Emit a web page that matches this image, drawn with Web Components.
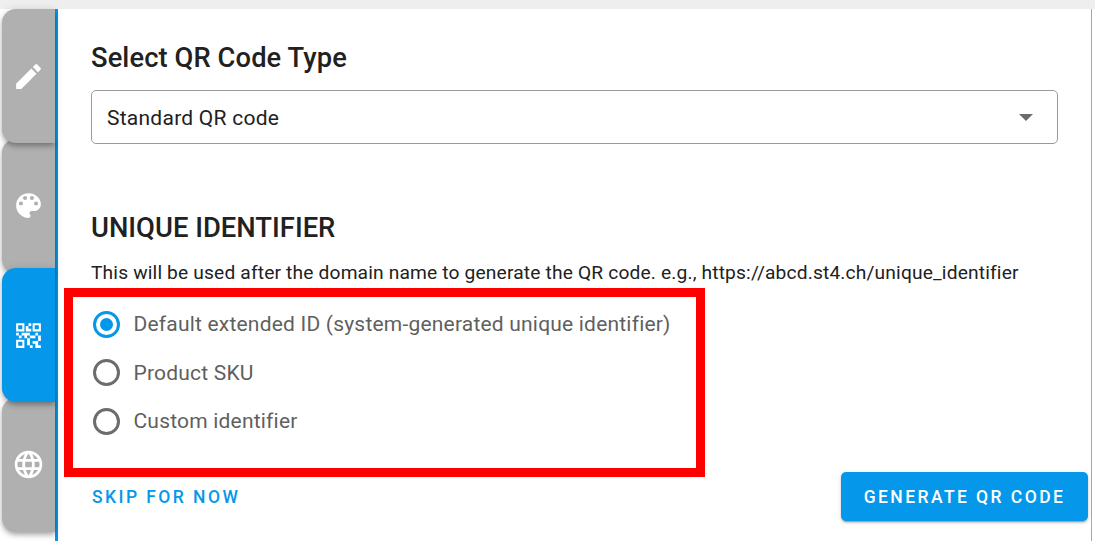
<!DOCTYPE html>
<html><head><meta charset="utf-8">
<style>
html,body{margin:0;padding:0;background:#fff;}
body{width:1100px;height:545px;overflow:hidden;font-family:Roboto,"Liberation Sans",sans-serif;}
</style></head>
<body>
<qr-shell>
  <side-tab slot="tabs" icon="edit"></side-tab>
  <side-tab slot="tabs" icon="palette"></side-tab>
  <side-tab slot="tabs" icon="qr" active></side-tab>
  <side-tab slot="tabs" icon="globe"></side-tab>
  <h-title>Select QR Code Type</h-title>
  <select-box>Standard QR code</select-box>
  <section-title>UNIQUE IDENTIFIER</section-title>
  <help-text>This will be used after the domain name to generate the QR code. e.g., https://abcd.st4.ch/unique_identifier</help-text>
  <radio-group>
    <radio-item checked>Default extended ID (system-generated unique identifier)</radio-item>
    <radio-item>Product SKU</radio-item>
    <radio-item>Custom identifier</radio-item>
  </radio-group>
  <action-row>
    <text-button>SKIP FOR NOW</text-button>
    <primary-button>GENERATE QR CODE</primary-button>
  </action-row>
</qr-shell>
<script>
const ICONS={
 edit:'<path d="M3 17.25V21h3.75L17.81 9.94l-3.75-3.75L3 17.25zM20.71 7.04a1 1 0 0 0 0-1.41l-2.34-2.34a1 1 0 0 0-1.41 0l-1.83 1.83 3.75 3.75 1.83-1.83z"/>',
 palette:'<path d="M12 3a9 9 0 0 0 0 18c.83 0 1.5-.67 1.5-1.5 0-.39-.15-.74-.39-1.01-.23-.26-.38-.61-.38-.99 0-.83.67-1.5 1.5-1.5H16c2.76 0 5-2.24 5-5 0-4.42-4.03-8-9-8zm-5.5 9a1.5 1.5 0 1 1 0-3 1.5 1.5 0 0 1 0 3zm3-4a1.5 1.5 0 1 1 0-3 1.5 1.5 0 0 1 0 3zm5 0a1.5 1.5 0 1 1 0-3 1.5 1.5 0 0 1 0 3zm3 4a1.5 1.5 0 1 1 0-3 1.5 1.5 0 0 1 0 3z"/>',
 qr:'<path d="M15 21h-2v-2h2v2zM13 14h-2v5h2v-5zM21 12h-2v4h2v-4zM19 10h-2v2h2v-2zM7 12H5v2h2v-2zM5 10H3v2h2v-2zM12 5h2V3h-2v2zM4.5 4.5v3h3v-3h-3zM9 9H3V3h6v6zM4.5 16.5v3h3v-3h-3zM9 21H3v-6h6v6zM16.5 4.5v3h3v-3h-3zM21 9h-6V3h6v6zM19 19v-3h-4v2h2v3h4v-2h-2zM17 12h-4v2h4v-2zM13 10H7v2h2v2h2v-2h2v-2zM14 9V7h-2V5h-2v4h4z"/>',
 globe:'<path d="M12 2a10 10 0 1 0 0 20 10 10 0 0 0 0-20zm6.93 6h-2.95a15.65 15.65 0 0 0-1.38-3.56A8.03 8.03 0 0 1 18.92 8zM12 4.04c.83 1.2 1.48 2.53 1.91 3.96h-3.82c.43-1.43 1.08-2.76 1.91-3.96zM4.26 14C4.1 13.36 4 12.69 4 12s.1-1.36.26-2h3.38c-.08.66-.14 1.32-.14 2s.06 1.34.14 2H4.26zm.82 2h2.95c.32 1.25.78 2.45 1.38 3.56A7.987 7.987 0 0 1 5.08 16zm2.95-8H5.08a7.987 7.987 0 0 1 4.33-3.56A15.65 15.65 0 0 0 8.03 8zM12 19.96c-.83-1.2-1.48-2.53-1.91-3.96h3.82c-.43 1.43-1.08 2.76-1.91 3.96zM14.34 14H9.66c-.09-.66-.16-1.32-.16-2s.07-1.35.16-2h4.68c.09.65.16 1.32.16 2s-.07 1.34-.16 2zm.25 5.56c.6-1.11 1.06-2.31 1.38-3.56h2.95a8.03 8.03 0 0 1-4.33 3.56zM16.36 14c.08-.66.14-1.32.14-2s-.06-1.34-.14-2h3.38c.16.64.26 1.31.26 2s-.1 1.36-.26 2h-3.38z"/>'
};
function def(name,css,html,init){
  customElements.define(name,class extends HTMLElement{
    constructor(){super();const s=this.attachShadow({mode:'open'});s.innerHTML='<style>'+css+'</style>'+html;}
    connectedCallback(){if(init)init(this);}
  });
}
def('qr-shell',`
 :host{display:block;width:1100px;height:541px;position:relative;background:#fff;overflow:hidden}
 .top{height:9px;width:1095px;background:#eeeeee}
 .body{display:flex;height:532px;width:1092px;box-sizing:border-box}
 .tabs{width:55px;flex:none;padding:0 0 0 2px;box-sizing:border-box;display:flex;flex-direction:column}
 .main{flex:1;border-left:3px solid #0597ea;border-right:1px solid #a8a8a8;padding:0 32px 0 33px;box-sizing:border-box;min-width:0;display:flex;flex-direction:column}
 .mark{position:absolute;left:64px;top:288px;width:641px;height:189px;box-sizing:border-box;border:9px solid #ff0000;pointer-events:none}
`,`<div class="top"></div><div class="body"><div class="tabs"><slot name="tabs"></slot></div><div class="main"><slot></slot></div></div><div class="mark"></div>`);
def('side-tab',`
 :host{display:flex;flex:none;align-items:center;justify-content:center;width:53px;height:134px;box-sizing:border-box;margin-bottom:-4.5px;background:#b0b0b0;border-radius:14px 0 0 14px;color:#fff;position:relative;box-shadow:0 2px 4px -1px rgba(0,0,0,.2),0 4px 5px 0 rgba(0,0,0,.14),0 1px 10px 0 rgba(0,0,0,.12)}
 :host([active]){background:#0597ea;z-index:3}
 :host([icon=edit]){z-index:2}
 svg{width:33px;height:33px;fill:currentColor;display:block}
`,`<svg viewBox="0 0 24 24"></svg>`,el=>{el.shadowRoot.querySelector('svg').innerHTML=ICONS[el.getAttribute('icon')];});
def('h-title',`:host{display:block;margin-top:34px;font-size:27.3px;line-height:30px;font-weight:500;color:#212121;letter-spacing:.1px}`,`<slot></slot>`);
def('select-box',`
 :host{display:flex;align-items:center;justify-content:space-between;margin-top:17px;height:54px;width:967px;box-sizing:border-box;border:1px solid #9a9a9a;border-radius:5px;padding:2px 24px 0 15px;font-size:21px;color:#212121;letter-spacing:.25px}
 i{display:block;width:0;height:0;margin-top:-2px;border-left:7px solid transparent;border-right:7px solid transparent;border-top:7px solid #6b6b6b}
`,`<slot></slot><i></i>`);
def('section-title',`:host{display:block;margin-top:69px;font-size:27.4px;line-height:30px;font-weight:500;color:#212121}`,`<slot></slot>`);
def('help-text',`:host{display:block;margin-top:18px;font-size:19.2px;line-height:24px;color:#212121;white-space:nowrap;letter-spacing:.16px}`,`<slot></slot>`);
def('radio-group',`:host{display:flex;flex-direction:column;margin-top:15px;margin-left:2px}`,`<slot></slot>`);
def('radio-item',`
 :host{display:flex;align-items:center;height:48.5px;font-size:21px;color:#5f5f5f;white-space:nowrap;letter-spacing:.2px}
 b{display:block;width:27px;height:27px;box-sizing:border-box;border:3px solid #6c6c6c;border-radius:50%;margin-right:13.5px;position:relative;flex:none}
 :host([checked]) b{border-color:#0597ea}
 :host([checked]) b::after{content:"";position:absolute;inset:4px;border-radius:50%;background:#0597ea}
`,`<b></b><slot></slot>`);
def('action-row',`:host{display:flex;align-items:center;justify-content:space-between;margin-top:26px;width:996px;margin-left:1px}`,`<slot></slot>`);
def('text-button',`:host{display:block;padding-top:2px;font-size:17.5px;font-weight:500;letter-spacing:2.43px;color:#0597ea;white-space:nowrap}`,`<slot></slot>`);
def('primary-button',`:host{display:flex;align-items:center;justify-content:center;width:247px;height:49px;box-sizing:border-box;padding-top:1px;background:#0597ea;color:#fff;border-radius:5px;font-size:17.5px;font-weight:500;letter-spacing:2.43px;white-space:nowrap;box-shadow:0 3px 1px -2px rgba(0,0,0,.2),0 2px 2px 0 rgba(0,0,0,.14),0 1px 5px 0 rgba(0,0,0,.12)}`,`<slot></slot>`);
</script>
</body></html>
